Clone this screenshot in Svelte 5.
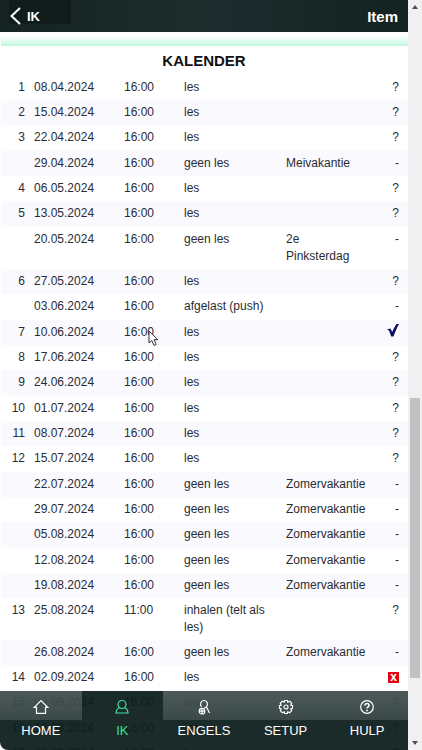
<script lang="ts">
  type Lesson = { nr?: number; date: string; time: string; kind: string; note?: string; mark: string };

  function les(nr: number, date: string, mark = "?"): Lesson {
    return { nr, date, time: "16:00", kind: "les", mark };
  }

  function geenLes(date: string, note: string): Lesson {
    return { date, time: "16:00", kind: "geen les", note, mark: "-" };
  }

  const lessons: Lesson[] = [
    les(1, "08.04.2024"),
    les(2, "15.04.2024"),
    les(3, "22.04.2024"),
    geenLes("29.04.2024", "Meivakantie"),
    les(4, "06.05.2024"),
    les(5, "13.05.2024"),
    geenLes("20.05.2024", "2e\nPinksterdag"),
    les(6, "27.05.2024"),
    { date: "03.06.2024", time: "16:00", kind: "afgelast (push)", mark: "-" },
    les(7, "10.06.2024", "present"),
    les(8, "17.06.2024"),
    les(9, "24.06.2024"),
    les(10, "01.07.2024"),
    les(11, "08.07.2024"),
    les(12, "15.07.2024"),
    geenLes("22.07.2024", "Zomervakantie"),
    geenLes("29.07.2024", "Zomervakantie"),
    geenLes("05.08.2024", "Zomervakantie"),
    geenLes("12.08.2024", "Zomervakantie"),
    geenLes("19.08.2024", "Zomervakantie"),
    { nr: 13, date: "25.08.2024", time: "11:00", kind: "inhalen (telt als les)", mark: "?" },
    geenLes("26.08.2024", "Zomervakantie"),
    les(14, "02.09.2024", "absent"),
    les(15, "09.09.2024"),
    les(16, "16.09.2024"),
    les(17, "23.09.2024"),
  ];

  const tabs = ["HOME", "IK", "ENGELS", "SETUP", "HULP"];
  let active = $state("IK");
</script>

<div class="screen">
  <div class="app">
    <header>
      <button class="back">
        <svg width="13" height="18" viewBox="0 0 13 18"><path d="M11 1 2.500 9l8.500 8" /></svg>
        IK
      </button>
      <h1>Item</h1>
    </header>

    <main>
      <div class="glow"></div>
      <h2>KALENDER</h2>
      <table>
        <tbody>
          {#each lessons as l}
            <tr>
              <td class="nr">{l.nr ?? ""}</td>
              <td class="date">{l.date}</td>
              <td class="time">{l.time}</td>
              <td class="kind">{l.kind}</td>
              <td class="note">{l.note ?? ""}</td>
              <td class="mark">
                {#if l.mark === "present"}
                  <svg class="check" width="12" height="13" viewBox="0 0 12 13" role="img" aria-label="aanwezig">
                    <path d="M0 5.500 3.500 4.500 5.200 8 C6.500 5 8 2 9.500 0H12C10 3.500 8 8 6.500 12.500H4.200L2.200 6.800Z" />
                  </svg>
                {:else if l.mark === "absent"}
                  <span class="absent">x</span>
                {:else}
                  {l.mark}
                {/if}
              </td>
            </tr>
          {/each}
        </tbody>
      </table>
    </main>

    <nav>
      {#each tabs as tab}
        <button class:active={active === tab} onclick={() => (active = tab)}>
          <span class="icon">
            <svg width="16" height="16" viewBox="0 0 16 16">
              {#if tab === "HOME"}
                <path d="M1.300 8.300 8 1.600 14.700 8.300H12.500V14.300H3.500V8.300Z" />
              {:else if tab === "IK"}
                <circle cx="8" cy="5.500" r="4" />
                <path d="M5.500 8.700C3 9.700 2 11.500 2 14H14C14 11.500 13 9.700 10.500 8.700" />
              {:else if tab === "ENGELS"}
                <path d="M5.500 7.800C3.600 5.600 4.600 1.500 8 1.500S12.400 5.400 10.500 7.800C9.800 8.700 9 8.700 8.500 8.300M10.500 8 13.500 14" />
                <circle cx="6" cy="12.200" r="2.800" />
                <path d="M3.500 12.200H8.500M6 9.500V15" />
              {:else if tab === "SETUP"}
                <path d="M6.700 1.500H9.300L9.800 3.200 11.700 2.300 13.700 4.300 12.800 6.200 14.500 6.700V9.300L12.800 9.800 13.700 11.700 11.700 13.700 9.800 12.800 9.300 14.500H6.700L6.200 12.800 4.300 13.700 2.300 11.700 3.200 9.800 1.500 9.300V6.700L3.200 6.200 2.300 4.300 4.300 2.300 6.200 3.200Z" />
                <circle cx="8" cy="8" r="2" />
              {:else}
                <circle cx="8" cy="8" r="6.300" />
                <path d="M6 6.500C6 3.800 10 3.800 10 6.400 10 8 8 7.800 8 9.500M8 10.800V12.200" stroke-width="1.600" />
              {/if}
            </svg>
          </span>
          <span class="label">{tab}</span>
        </button>
      {/each}
    </nav>

    <svg class="cursor" width="11" height="17" viewBox="0 0 11 17">
      <path d="M1 1V13L3.800 10.500 6 15.500 8.200 14.500 6 9.700H9.800Z" />
    </svg>
  </div>

  <div class="scrollbar">
    <svg width="6" height="4" viewBox="0 0 6 4"><path d="M0 4 3 0 6 4Z" /></svg>
    <div class="track"><div class="thumb"></div></div>
    <svg width="6" height="4" viewBox="0 0 6 4"><path d="M0 0 3 4 6 0Z" /></svg>
  </div>
</div>

<style>
  :global(body) { background: #fff; }
  .screen { display: flex; height: 100vh; overflow: hidden; font-family: "Liberation Sans", Arial, sans-serif; font-size: 12px; line-height: 17px; color: #2b2b33; }
  .app { position: relative; flex: 1; min-width: 0; overflow: hidden; }
  button { border: 0; padding: 0; background: none; font: inherit; cursor: pointer; }

  header { display: flex; align-items: center; justify-content: space-between; box-sizing: border-box; height: 32px; padding: 0 10px 0 9px; background: linear-gradient(#0f1c1b, #0f1c1b) 9px 0 / 62px 24px no-repeat, linear-gradient(90deg, #152422, #1e2c2d 50%, #122321); color: #fff; }
  .back { display: flex; align-items: center; gap: 5px; color: #fff; font-size: 13px; font-weight: bold; }
  .back path { fill: none; stroke: #fff; stroke-width: 2; }
  h1 { margin: 0; font-size: 15px; font-weight: bold; }

  .glow { height: 14px; margin-left: 1px; background: linear-gradient(#fff 25%, #e4fcf1 60%, #c0f7de); }
  h2 { margin: 0; padding: 6px 0; font-size: 15px; line-height: 17px; text-align: center; color: #111; }

  table { width: 100%; padding-left: 1px; border-spacing: 0; table-layout: fixed; }
  tr { height: 25px; }
  tr:nth-child(3n) { height: 26px; }
  tr:nth-child(even) { background: #f9f9fe; }
  td { padding: 4px 0; vertical-align: top; }
  .nr { width: 24px; text-align: right; }
  .date { width: 90px; padding-left: 9px; }
  .time { width: 60px; }
  .kind { width: 94px; padding-right: 8px; }
  .note { white-space: pre-line; }
  .mark { width: 26px; padding-right: 9px; text-align: right; }
  .check { display: block; margin-left: auto; fill: #0b0b66; }
  .absent { display: inline-block; width: 11px; height: 11px; background: #e3000f; color: #fff; font-weight: bold; line-height: 10px; text-align: center; vertical-align: middle; }

  nav { position: absolute; left: 0; right: 0; bottom: 0; display: flex; height: 59px; border-radius: 0 0 0 8px; overflow: hidden; background: rgba(12, 30, 29, 0.94); }
  nav button { flex: 1; display: flex; flex-direction: column; color: #fff; font-size: 13px; }
  .icon { display: flex; align-items: center; justify-content: center; width: 100%; height: 29px; padding-top: 3px; box-sizing: border-box; background: linear-gradient(rgba(255, 255, 255, 0.22), rgba(255, 255, 255, 0.14)); }
  .icon svg { fill: none; stroke: currentColor; stroke-width: 1.2; }
  .label { width: 100%; padding-top: 2px; line-height: 18px; text-align: center; }
  nav .active { color: #3be29a; }
  .active .icon { background: none; }

  .cursor { position: absolute; left: 148px; top: 330px; fill: #fff; stroke: #333; stroke-width: 1; }

  .scrollbar { display: flex; flex-direction: column; align-items: center; box-sizing: border-box; width: 14px; padding: 5px 0; background: #f0f0f0; fill: #505050; }
  .track { flex: 1; width: 10px; margin: 5px 0; }
  .thumb { height: 280px; margin-top: 384px; background: #c1c1c1; }
</style>
